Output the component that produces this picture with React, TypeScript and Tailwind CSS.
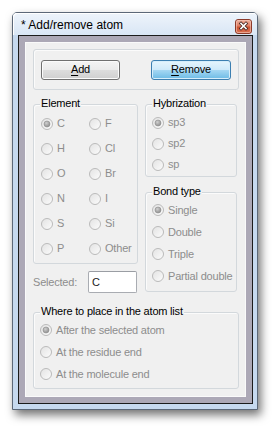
import React, { useId } from "react";

function Radio({ checked }: { checked?: boolean }) {
  const id = useId().replace(/[^a-zA-Z0-9]/g, "");
  return (
    <svg width="12" height="12" viewBox="0 0 12 12" className="shrink-0">
      <defs>
        <linearGradient id={`f${id}`} x1="0" y1="0" x2="1" y2="1">
          <stop offset="0" stopColor="#e2e2e2" />
          <stop offset="1" stopColor="#fcfcfc" />
        </linearGradient>
        <radialGradient id={`d${id}`} cx="0.4" cy="0.35" r="0.7">
          <stop offset="0" stopColor="#d0d0d0" />
          <stop offset="1" stopColor="#8a8a8a" />
        </radialGradient>
      </defs>
      <circle cx="6" cy="6" r="5.5" fill={`url(#f${id})`} stroke="#bababa" />
      {checked && (
        <circle cx="6" cy="6" r="3" fill={`url(#d${id})`} stroke="#8f8f8f" strokeWidth="0.6" />
      )}
    </svg>
  );
}

function Opt({ label, checked, className }: { label: string; checked?: boolean; className: string }) {
  return (
    <div className={`flex items-center gap-[4px] ${className}`}>
      <Radio checked={checked} />
      <span className="text-[#8d8d8d] whitespace-nowrap">{label}</span>
    </div>
  );
}

function Group({ title, className, children }: { title?: string; className: string; children: React.ReactNode }) {
  return (
    <div className={`relative rounded-[3px] border border-[#d3d8dc] shadow-[inset_1px_1px_0_#fbfbfb] ${className}`}>
      {title && (
        <span className="absolute left-[6px] top-[-8px] bg-[#f0f0f0] px-[1px] leading-[13px] text-black whitespace-nowrap">
          {title}
        </span>
      )}
      {children}
    </div>
  );
}

function CloseButton() {
  return (
    <svg width="17" height="15" viewBox="0 0 17 15">
      <defs>
        <linearGradient id="cbg" x1="0" y1="0" x2="0" y2="1">
          <stop offset="0" stopColor="#eeb3a2" />
          <stop offset="0.45" stopColor="#df7e63" />
          <stop offset="0.55" stopColor="#cc5230" />
          <stop offset="1" stopColor="#dc7457" />
        </linearGradient>
      </defs>
      <rect x="0.5" y="0.5" width="16" height="14" rx="2.5" fill="url(#cbg)" stroke="#8b3a2a" />
      <rect x="1.5" y="1.5" width="14" height="12" rx="1.5" fill="none" stroke="#f5c9bb" strokeOpacity="0.6" />
      <path d="M6 4.5 L11 9.5 M11 4.5 L6 9.5" stroke="#4a2a24" strokeWidth="3.2" strokeLinecap="square" />
      <path d="M6 4.5 L11 9.5 M11 4.5 L6 9.5" stroke="#ffffff" strokeWidth="1.6" strokeLinecap="square" />
    </svg>
  );
}

export default function App() {
  return (
    <div className="w-[276px] h-[430px] bg-white pl-[12px] pt-[12px] font-['Liberation_Sans',Arial,sans-serif] text-[11px] leading-[13px] tracking-[-0.2px]">
      <div className="w-[246px] h-[398px] rounded-t-[5px] border border-[#5c6878] bg-[#c6d9ef] shadow-[3px_5px_10px_rgba(0,0,0,0.55)] flex flex-col">
        {/* title bar */}
        <div className="h-[22px] shrink-0 rounded-t-[4px] bg-[linear-gradient(to_bottom,#eef4fb,#d9e6f5)] shadow-[inset_1px_1px_0_#ffffff] flex items-center pl-[8px] pr-[5px]">
          <span className="text-[12px] leading-[14px] tracking-normal text-black mt-[1px]">
            * Add/remove atom
          </span>
          <div className="ml-auto mt-[5px]">
            <CloseButton />
          </div>
        </div>
        {/* client */}
        <div className="flex-1 ml-[5px] mr-[4px] mb-[5px] border border-[#1b1b1b] bg-[#aca8b6] p-[6px]">
          <div className="h-full border border-[#fafafa] bg-[#f0f0f0] pl-[7px] pr-[6px] pt-[6px] pb-[5px] flex flex-col">
            <Group className="h-[41px] flex items-center justify-between px-[7px]">
              <button className="w-[79px] h-[20px] rounded-[3px] border border-[#707070] bg-[linear-gradient(to_bottom,#f4f4f4_0%,#ebebeb_48%,#dddddd_52%,#cfcfcf_100%)] shadow-[inset_0_0_0_1px_#fbfbfb] text-black text-[11px] leading-[13px]">
                <u className="underline-offset-[2px]">A</u>dd
              </button>
              <button className="w-[80px] h-[20px] rounded-[3px] border border-[#3c7fb1] bg-[linear-gradient(to_bottom,#e6f5fd_0%,#cfeafa_48%,#a4d7f3_52%,#6cbbe5_100%)] shadow-[inset_0_0_0_1px_#d6eefb] text-black text-[11px] leading-[13px]">
                <u className="underline-offset-[2px]">R</u>emove
              </button>
            </Group>

            <div className="mt-[14px] flex gap-[7px]">
              <div className="w-[105px] flex flex-col">
                <Group title="Element" className="h-[160px] pt-[6px] pl-[7px]">
                  <div className="grid grid-cols-[48px_1fr]">
                    <Opt label="C" checked className="h-[25px]" />
                    <Opt label="F" className="h-[25px]" />
                    <Opt label="H" className="h-[25px]" />
                    <Opt label="Cl" className="h-[25px]" />
                    <Opt label="O" className="h-[25px]" />
                    <Opt label="Br" className="h-[25px]" />
                    <Opt label="N" className="h-[25px]" />
                    <Opt label="I" className="h-[25px]" />
                    <Opt label="S" className="h-[25px]" />
                    <Opt label="Si" className="h-[25px]" />
                    <Opt label="P" className="h-[25px]" />
                    <Opt label="Other" className="h-[25px]" />
                  </div>
                </Group>
                <div className="mt-[7px] flex items-center">
                  <span className="text-[#8d8d8d]">Selected:</span>
                  <div className="ml-auto mr-[1px] w-[49px] h-[22px] rounded-[2px] border border-[#a9acb2] border-t-[#9a9da3] bg-white flex items-center pl-[3px] text-[#222] text-[11px]">
                    C
                  </div>
                </div>
              </div>
              <div className="w-[92px] flex flex-col">
                <Group title="Hybrization" className="h-[73px] pt-[7px] pl-[6px]">
                  <Opt label="sp3" checked className="h-[21px]" />
                  <Opt label="sp2" className="h-[21px]" />
                  <Opt label="sp" className="h-[21px]" />
                </Group>
                <Group title="Bond type" className="mt-[15px] h-[100px] pt-[6px] pl-[6px]">
                  <Opt label="Single" checked className="h-[22px]" />
                  <Opt label="Double" className="h-[22px]" />
                  <Opt label="Triple" className="h-[22px]" />
                  <Opt label="Partial double" className="h-[22px]" />
                </Group>
              </div>
            </div>

            <Group title="Where to place in the atom list" className="mt-[19px] h-[77px] pt-[6px] pl-[6px]">
              <Opt label="After the selected atom" checked className="h-[22px]" />
              <Opt label="At the residue end" className="h-[22px]" />
              <Opt label="At the molecule end" className="h-[22px]" />
            </Group>
          </div>
        </div>
      </div>
    </div>
  );
}
